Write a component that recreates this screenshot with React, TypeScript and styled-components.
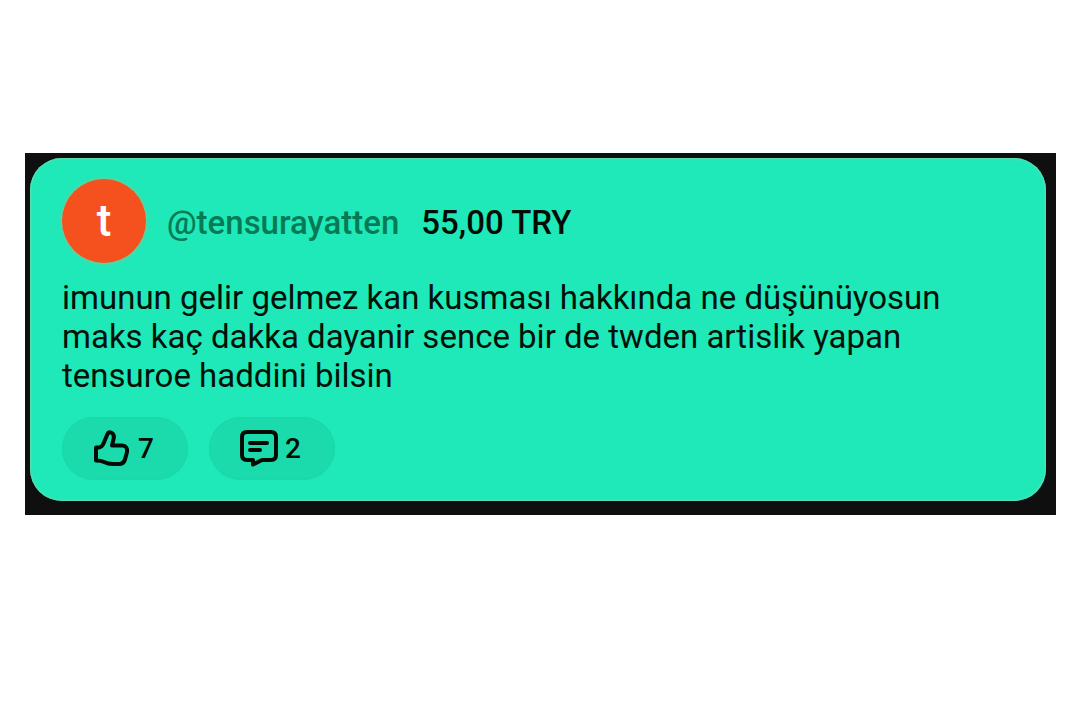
import React from "react";
import styled, { createGlobalStyle } from "styled-components";

const GlobalStyle = createGlobalStyle`
  body {
    margin: 0;
    background: #ffffff;
    font-family: Roboto, "Liberation Sans", sans-serif;
  }
`;

const Page = styled.main`
  box-sizing: border-box;
  min-height: 100vh;
  display: flex;
  flex-direction: column;
  padding: 153px 24px 32px 25px;
`;

const Frame = styled.div`
  background: #0f0f0f;
  padding: 5px 10px 14px 5px;
`;

const Card = styled.article`
  box-sizing: border-box;
  background: #1fe9b8;
  border-radius: 32px;
  padding: 21px 32px;
  box-shadow: inset 0 0 2px 1px #62dcb4;
  color: #031208;
`;

const Header = styled.header`
  display: flex;
  align-items: center;
`;

const Avatar = styled.div`
  width: 84px;
  height: 84px;
  margin-right: 21px;
  border-radius: 50%;
  background: #f5511e;
  box-shadow: 0 0 3px 1px #7fc795;
  color: #ffffff;
  font-size: 44px;
  font-weight: 500;
  line-height: 84px;
  text-align: center;
`;

const Identity = styled.div`
  display: flex;
  gap: 22px;
  padding-top: 2px;
  font-size: 33px;
  font-weight: 500;
  line-height: 39px;
`;

const Handle = styled.a`
  color: #077a55;
  text-decoration: none;
`;

const Amount = styled.span`
  color: #020c04;
`;

const Message = styled.p`
  margin: 15px 0 22px;
  max-width: 900px;
  font-size: 33px;
  line-height: 39px;
`;

const Actions = styled.div`
  display: flex;
  gap: 21px;
`;

const Pill = styled.button`
  display: flex;
  align-items: center;
  gap: 5px;
  width: 126px;
  height: 63px;
  padding: 1px 0 0 29px;
  border: 0;
  border-radius: 32px;
  background: #1bdbac;
  box-shadow: inset 0 0 1px 1px #1bd7a9;
  color: #020c04;
  font-family: inherit;
  font-size: 28px;
  font-weight: 500;
  line-height: 32px;
`;

const Icon = styled.svg`
  flex: none;
  width: 42px;
  height: 42px;
  fill: none;
  stroke: #020c04;
  stroke-width: 4;
  stroke-linejoin: round;
  stroke-linecap: round;
`;

export default function App() {
  return (
    <>
      <GlobalStyle />
      <Page>
        <Frame>
          <Card>
            <Header>
              <Avatar>t</Avatar>
              <Identity>
                <Handle href="#tensurayatten">@tensurayatten</Handle>
                <Amount>55,00 TRY</Amount>
              </Identity>
            </Header>
            <Message>
              imunun gelir gelmez kan kusması hakkında ne düşünüyosun maks kaç
              dakka dayanir sence bir de twden artislik yapan tensuroe haddini
              bilsin
            </Message>
            <Actions>
              <Pill type="button" aria-label="7 likes">
                <Icon viewBox="0 0 42 42">
                  <path d="M5 19.5H8Q11 19 12.5 15.5L16.5 6Q17.5 3.5 20 4.5Q23.5 6 22.8 10L21 17.5H31Q37 18 36 24L34 31.500Q32.500 36 28 36H22Q17 36 13 34Q10 32.500 5 32.500Z" />
                </Icon>
                <span>7</span>
              </Pill>
              <Pill type="button" aria-label="2 comments">
                <Icon viewBox="0 0 42 42">
                  <path d="M9 4H33Q38 4 38 9V27Q38 32 33 32H24L15 36.500V32H9Q4 32 4 27V9Q4 4 9 4Z" />
                  <path d="M12 15H29M12 22H22" />
                </Icon>
                <span>2</span>
              </Pill>
            </Actions>
          </Card>
        </Frame>
      </Page>
    </>
  );
}
